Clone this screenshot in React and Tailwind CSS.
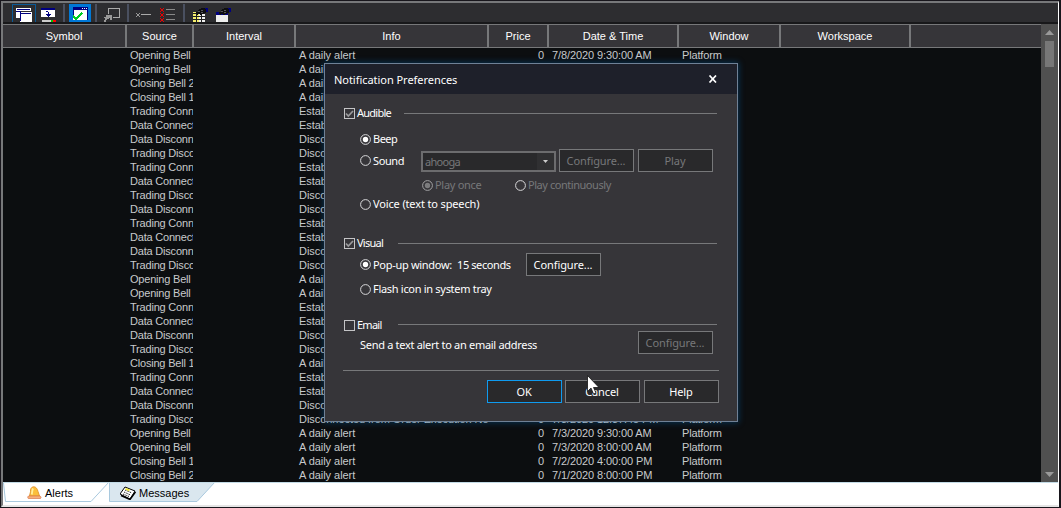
import clsx from 'clsx';

const columns = [
  { title: 'Symbol', width: 'w-[124px]' },
  { title: 'Source', width: 'w-[67px]' },
  { title: 'Interval', width: 'w-[102px]' },
  { title: 'Info', width: 'w-[193px]' },
  { title: 'Price', width: 'w-[60px]' },
  { title: 'Date & Time', width: 'w-[130px]' },
  { title: 'Window', width: 'w-[102px]' },
  { title: 'Workspace', width: 'w-[130px]' },
];

const DAILY = 'A daily alert';
const ESTABLISHED = 'Established connection';
const DISCONNECTED = 'Disconnected from Order Execution No';

const alerts = [
  ['Opening Bell', DAILY, '7/8/2020 9:30:00 AM'],
  ['Opening Bell', DAILY, '7/8/2020 8:00:00 AM'],
  ['Closing Bell 2', DAILY, '7/7/2020 8:00:00 PM'],
  ['Closing Bell 1', DAILY, '7/7/2020 4:00:00 PM'],
  ['Trading Connected', ESTABLISHED, '7/7/2020 1:12:40 PM'],
  ['Data Connected', ESTABLISHED, '7/7/2020 1:12:38 PM'],
  ['Data Disconnected', DISCONNECTED, '7/7/2020 1:10:02 PM'],
  ['Trading Disconnected', DISCONNECTED, '7/7/2020 1:10:02 PM'],
  ['Trading Connected', ESTABLISHED, '7/7/2020 9:42:17 AM'],
  ['Data Connected', ESTABLISHED, '7/7/2020 9:42:15 AM'],
  ['Trading Disconnected', DISCONNECTED, '7/6/2020 6:30:21 PM'],
  ['Data Disconnected', DISCONNECTED, '7/6/2020 6:30:21 PM'],
  ['Trading Connected', ESTABLISHED, '7/6/2020 2:05:51 PM'],
  ['Data Connected', ESTABLISHED, '7/6/2020 2:05:49 PM'],
  ['Data Disconnected', DISCONNECTED, '7/6/2020 1:58:10 PM'],
  ['Trading Disconnected', DISCONNECTED, '7/6/2020 1:58:10 PM'],
  ['Opening Bell', DAILY, '7/6/2020 9:30:00 AM'],
  ['Opening Bell', DAILY, '7/6/2020 8:00:00 AM'],
  ['Trading Connected', ESTABLISHED, '7/6/2020 7:44:32 AM'],
  ['Data Connected', ESTABLISHED, '7/6/2020 7:44:30 AM'],
  ['Data Disconnected', DISCONNECTED, '7/3/2020 5:16:04 PM'],
  ['Trading Disconnected', DISCONNECTED, '7/3/2020 5:16:04 PM'],
  ['Closing Bell 1', DAILY, '7/3/2020 4:00:00 PM'],
  ['Trading Connected', ESTABLISHED, '7/3/2020 1:20:12 PM'],
  ['Data Connected', ESTABLISHED, '7/3/2020 1:20:10 PM'],
  ['Data Disconnected', DISCONNECTED, '7/3/2020 12:37:45 PM'],
  ['Trading Disconnected', DISCONNECTED, '7/3/2020 12:37:45 PM'],
  ['Opening Bell', DAILY, '7/3/2020 9:30:00 AM'],
  ['Opening Bell', DAILY, '7/3/2020 8:00:00 AM'],
  ['Closing Bell 1', DAILY, '7/2/2020 4:00:00 PM'],
  ['Closing Bell 2', DAILY, '7/1/2020 8:00:00 PM'],
];

const Icon = ({ width = 16, className, children }) => (
  <svg
    width={width}
    height="14"
    viewBox={`0 0 ${width} 14`}
    shapeRendering="crispEdges"
    className={clsx('block shrink-0', className)}
  >
    {children}
  </svg>
);

const Separator = ({ className }) => <div className={clsx('w-[2px] h-[18px] bg-[#4a5060] shrink-0', className)} />;

// pointing hand shared by the two property icons
const Hand = () => (
  <>
    <path d="M3 4h2V2h1V1h2V0h5v5h-2v1h-2v1H7V6H5v1H4V6H3z" fill="#0e0e10" />
    <path d="M5 3h2v1H5zM8 2h2v1H8zM8 4h2v1H8z" fill="#55565a" />
    <path d="M12 0h3v1h-3zM13 1h2v3h-2z" fill="#000080" />
  </>
);

const Toolbar = () => (
  <div className="h-[19px] flex items-end bg-[#2d2d30] overflow-hidden">
    <div className="ml-[9px] w-6 h-[18px] pt-[3px] pl-[3px] border border-b-0 border-[#0a5a96]">
      <Icon>
        <path d="M0 0h15v3H0z" fill="#fff" />
        <path d="M1 1h13v1H1z" fill="#000080" />
        <path d="M0 4h4v6H0z" fill="#fff" />
        <path d="M0 3h4v1H0z" fill="#000080" />
        <path d="M4 4h12v10H4z" fill="#fff" />
        <path d="M5 5h10v1H5zM4 3h1v10H4z" fill="#000080" />
      </Icon>
    </div>
    <Icon className="ml-[5px]">
      <path d="M0 0h14v9H0z" fill="#fff" />
      <path d="M0 0h14v2H0zM5 3h2v1H5zM7 4h1v4H7zM5 6h5v1H5zM6 7h3v1H6zM7 8h1v1H7z" fill="#000080" />
      <path d="M1 12h14v2H1z" fill="#ccc" />
      <path d="M10 12h2v2h-2z" fill="#0c0" />
      <path d="M12 12h3v2h-3z" fill="red" />
    </Icon>
    <Separator className="ml-[6px]" />
    <div className="ml-1 w-[22px] h-[18px] pt-[3px] pl-1 bg-[#0078d7]">
      <Icon>
        <path d="M0 0h15v13H0z" fill="#fff" />
        <path d="M0 0h15v3H0zM0 3h1v6H0zM14 3h1v10h-1z" fill="#000080" />
        <path d="M9 1h1v1h-1zM11 1h1v1h-1zM13 1h1v1h-1z" fill="#fff" />
        <path d="M0 9l3 3 6-6" stroke="#0c2" strokeWidth="2" fill="none" />
      </Icon>
    </div>
    <Separator className="ml-1" />
    <Icon className="ml-[7px]">
      <path d="M4.500 6V0.500h11v9h-7" stroke="#aaa" fill="none" />
      <path d="M2 7h6v5H6v-2H5v1H3v1H2v2H0v-2h1v-2H0V9h2z" fill="#999" />
    </Icon>
    <Separator className="ml-[7px]" />
    <Icon className="ml-[7px]">
      <path d="M0 5h1v1H0zM3 5h1v1H3zM1 6h2v2H1zM0 8h1v1H0zM3 8h1v1H3z" fill="#999" />
      <path d="M5 6h10v1H5z" fill="#aaa" />
    </Icon>
    <Icon className="ml-[8px]">
      {[1, 6, 11].map((y) => (
        <g key={y}>
          <path d={`M0 ${y - 1}l4 4M4 ${y - 1}l-4 4`} stroke="#e00" />
          <path d={`M6 ${y + 0.5}h9`} stroke="#888" />
        </g>
      ))}
    </Icon>
    <Separator className="ml-[7px]" />
    <Icon className="ml-[8px]">
      <path d="M0 4h6v10H0z" fill="#f5ef6e" />
      <path d="M6 4h6v10H6z" fill="#eee" />
      <path d="M0 5.500h12M0 8.500h12M0 11.500h12M3.500 3v11M8.500 4v10" stroke="#222" />
      <Hand />
    </Icon>
    <Icon className="ml-[7px]">
      <path d="M0 4h12v10H0z" fill="#eee" />
      <path d="M0 4h12v3H0z" fill="#000080" />
      <Hand />
    </Icon>
  </div>
);

const AlertsTable = () => (
  <div className="flex-1 min-w-0 flex flex-col">
    <div className="h-6 flex border-y border-[#77787a] bg-[#363539] text-white">
      {columns.map((column) => (
        <div
          key={column.title}
          className={clsx(
            'flex items-center justify-center shrink-0 border-r-2 border-[#77787a] whitespace-nowrap',
            column.width
          )}
        >
          {column.title}
        </div>
      ))}
    </div>
    <div className="h-[434px] overflow-hidden text-[#c8cacc]">
      {alerts.map(([source, info, date], i) => (
        <div key={i} className="flex h-[14px] leading-[14px] whitespace-nowrap">
          <div className="w-[123px] shrink-0" />
          <div className="w-[67px] pl-1 shrink-0 overflow-hidden tracking-[-0.2px]">{source}</div>
          <div className="w-[102px] shrink-0" />
          <div className="w-[193px] pl-1 shrink-0 overflow-hidden tracking-[-0.05px]">{info}</div>
          <div className="w-[60px] pr-1 shrink-0 text-right">0</div>
          <div className="w-[130px] pl-1 shrink-0 overflow-hidden tracking-[-0.1px]">{date}</div>
          <div className="w-[102px] pl-1 shrink-0 tracking-[-0.15px]">Platform</div>
        </div>
      ))}
    </div>
  </div>
);

const Scrollbar = () => (
  <div className="w-[17px] shrink-0 flex flex-col items-center justify-between bg-[#505050] pt-[6px] pb-[5px]">
    <div className="flex flex-col items-center gap-[6px]">
      <svg width="9" height="5" viewBox="0 0 9 5">
        <path d="M0 5l4.500-5L9 5z" fill="#999" />
      </svg>
      <div className="w-[9px] h-[26px] bg-[#777]" />
    </div>
    <svg width="9" height="5" viewBox="0 0 9 5">
      <path d="M0 0l4.500 5L9 0z" fill="#999" />
    </svg>
  </div>
);

const BellIcon = () => (
  <svg width="15" height="14" viewBox="0 0 15 14" className="shrink-0">
    <path d="M6.500 0.800c-2.500.2-3.200 2.500-3 5L2.500 10h10L11 5.500c-.6-2.500-2-4.900-4.500-4.700z" fill="#fbbf3c" stroke="#e59a35" />
    <path d="M6 2.500c-1 2-.8 4-1.200 6" stroke="#fff0a0" strokeWidth="1.800" fill="none" />
    <path d="M1.500 10c-1 .5-1 2.500 0 2.500h12c1-.5.500-2-.5-2.500z" fill="#f7b27a" stroke="#d9774f" strokeWidth=".7" />
  </svg>
);

const MessagesIcon = () => (
  <svg width="16" height="14" viewBox="0 0 16 14" className="shrink-0">
    <path d="M5 1l10 4-5 8L0 8z" fill="#fff" stroke="#000" />
    <path d="M1 9.500l9 4 5.500-7.500" stroke="#000" strokeWidth="1.500" fill="none" />
    <path d="M5 4l7 3M4 6l6.500 3M3 8l6 2.500" stroke="#222" strokeDasharray="1.500 1" />
    <path d="M6 2l4 1.600-1 1.600-4-1.600z" fill="#f5ec3a" />
  </svg>
);

const BottomTabs = () => (
  <div className="h-[23px] flex bg-white border-t border-[#c3dbe6] text-black">
    <div className="relative w-[106px] h-[19px]">
      <svg width="106" height="19" viewBox="0 0 106 19" className="absolute inset-0">
        <path d="M0 -1H106L88 18.500H2.500L.5 0" fill="#fff" stroke="#a9c9de" />
      </svg>
      <div className="relative flex items-center gap-[3px] h-full pl-6">
        <BellIcon />
        <span>Alerts</span>
      </div>
    </div>
    <div className="relative w-[106px] h-[19px]">
      <svg width="106" height="19" viewBox="0 0 106 19" className="absolute inset-0">
        <path d="M0.500 -1H106L88 18.500H.5z" fill="#dae7ef" stroke="#a9c9de" />
      </svg>
      <div className="relative flex items-center gap-[3px] h-full pl-[11px]">
        <MessagesIcon />
        <span>Messages</span>
      </div>
    </div>
  </div>
);

const CheckBox = ({ checked }) => (
  <div className="w-[11px] h-[11px] shrink-0 border border-[#c4c4c6]">
    {checked && (
      <svg width="9" height="9" viewBox="0 0 9 9">
        <path d="M1 4.500l2.300 2.500L8 2" stroke="#9a9a9c" strokeWidth="1.700" fill="none" />
      </svg>
    )}
  </div>
);

const Radio = ({ checked, dim }) => (
  <svg width="11" height="11" viewBox="0 0 11 11" className="shrink-0">
    <circle cx="5.500" cy="5.500" r="4.900" fill="none" stroke={dim ? '#a2a2a4' : '#d8d8da'} />
    {checked && <circle cx="5.500" cy="5.500" r="2.700" fill={dim ? '#7c7c7e' : '#fff'} />}
  </svg>
);

const Button = ({ primary, disabled, className, children }) => (
  <button
    className={clsx(
      'w-[75px] h-[23px] shrink-0 flex items-center justify-center border bg-[#29292b] whitespace-nowrap tracking-[-0.1px] pr-px',
      primary ? 'border-[#0f9bf0]' : 'border-[#77787a]',
      disabled ? 'text-[#77787a]' : 'text-white',
      className
    )}
  >
    {children}
  </button>
);

const SectionTitle = ({ title, checked, labelWidth, className, lineClassName }) => (
  <div className={clsx('flex items-center ml-[19px] mr-5', className)}>
    <CheckBox checked={checked} />
    <span className={clsx('ml-[2px] -mt-[2px] tracking-[-0.75px]', labelWidth)}>{title}</span>
    <div className={clsx('flex-1 h-px bg-[#77787a]', lineClassName)} />
  </div>
);

const NotificationDialog = () => (
  <div className="absolute left-[324px] top-[63px] w-[414px] h-[359px] flex flex-col border border-[#6f8196] bg-[#363539] text-white font-['Noto_Sans',sans-serif] text-[11px] leading-[15px] tracking-[-0.3px] whitespace-nowrap shadow-[0_0_6px_1px_rgba(0,100,170,0.4)]">
    <div className="h-[30px] flex items-center justify-between pl-[9px] pr-5 bg-[#1e202a]">
      <span className="tracking-[-0.04px]">Notification Preferences</span>
      <svg width="9" height="8" viewBox="0 0 9 8">
        <path d="M1.500 .5l6.500 7M8 .5l-6.500 7" stroke="#fff" strokeWidth="1.700" />
      </svg>
    </div>

    <SectionTitle title="Audible" checked labelWidth="w-[47px]" className="mt-[11px] h-[17px]" />
    <div className="mt-[9px] h-[17px] ml-[35px] flex items-center gap-[2px]">
      <Radio checked />
      <span className="-mt-[2px] tracking-[-0.5px]">Beep</span>
    </div>
    <div className="mt-px h-[23px] ml-[35px] flex items-center">
      <Radio />
      <span className="ml-[2px] w-12 tracking-[-0.4px]">Sound</span>
      <div className="self-end w-[135px] h-[21px] flex items-center justify-between border-2 border-[#6c6c6e] bg-[#29292b] text-[#77787a] pl-[2px]">
        <span className="tracking-[-0.7px]">ahooga</span>
        <div className="w-[17px] h-full flex items-center justify-center bg-[#303032]">
          <svg width="5" height="3" viewBox="0 0 5 3">
            <path d="M0 0h5L2.500 3z" fill="#ccc" />
          </svg>
        </div>
      </div>
      <Button disabled className="ml-[3px]">Configure...</Button>
      <Button disabled className="ml-1">Play</Button>
    </div>
    <div className="mt-[5px] h-[17px] ml-[97px] flex items-center text-[#77787a]">
      <Radio checked dim />
      <span className="ml-[2px] -mt-[2px] w-20">Play once</span>
      <Radio />
      <span className="ml-[2px] -mt-[2px] tracking-[-0.45px]">Play continuously</span>
    </div>
    <div className="mt-[2px] h-[17px] ml-[35px] flex items-center gap-[2px]">
      <Radio />
      <span className="-mt-[2px] tracking-[-0.14px]">Voice (text to speech)</span>
    </div>

    <SectionTitle title="Visual" checked labelWidth="w-[41px]" className="mt-[22px] h-[17px]" />
    <div className="mt-px h-[23px] ml-[35px] flex items-center">
      <Radio checked />
      <span className="ml-[2px] w-[84px]">Pop-up window:</span>
      <span className="w-[69px] tracking-[-0.4px]">15 seconds</span>
      <Button>Configure...</Button>
    </div>
    <div className="mt-[5px] h-[17px] ml-[35px] flex items-center gap-[2px]">
      <Radio />
      <span className="-mt-[2px]">Flash icon in system tray</span>
    </div>

    <SectionTitle title="Email" labelWidth="w-[41px]" className="mt-[22px] h-[11px]" lineClassName="-mt-[2px]" />
    <div className="h-[23px] ml-[35px] mr-6 flex justify-between">
      <span className="mt-[6px]">Send a text alert to an email address</span>
      <Button disabled>Configure...</Button>
    </div>

    <div className="mt-4 h-px ml-[18px] mr-[18px] bg-[#77787a]" />
    <div className="mt-[9px] mr-[18px] flex justify-end">
      <Button primary>OK</Button>
      <Button className="ml-[3px]">Cancel</Button>
      <Button className="ml-1">Help</Button>
    </div>
  </div>
);

const Cursor = () => (
  <svg width="13" height="20" viewBox="0 0 13 20" className="absolute left-[587px] top-[375px]">
    <path d="M.5 .5v16l3.500-3.500 2.500 6 2.500-1-2.500-5.500H12z" fill="#fff" stroke="#111" strokeWidth=".8" />
  </svg>
);

const App = () => {
  return (
    <div className="relative w-[1061px] h-[508px] overflow-hidden pl-px pt-px pr-[2px] bg-[#18161c] font-['Liberation_Sans',Arial,sans-serif] text-[11px] leading-[14px]">
      <div className="h-[506px] flex flex-col border-l-2 border-t-2 border-r border-b-2 border-l-[#77787a] border-t-[#77787a] border-r-white border-b-[#e5e5e5]">
        <Toolbar />
        <div className="h-[2px] bg-[#18181a]" />
        <div className="h-[458px] flex bg-[#0c0e10]">
          <AlertsTable />
          <Scrollbar />
        </div>
        <BottomTabs />
      </div>
      <NotificationDialog />
      <Cursor />
    </div>
  );
};

export default App;
